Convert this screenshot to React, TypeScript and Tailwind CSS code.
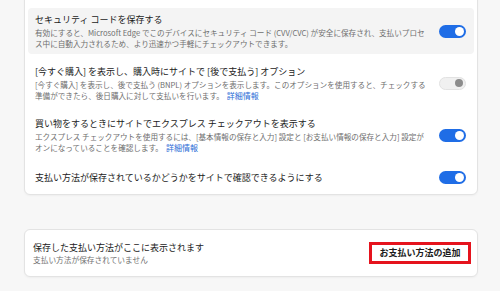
import React from "react";

const font = { fontFamily: '"Noto Sans CJK JP", "Noto Sans", sans-serif' };

function Toggle({ on, disabled }: { on: boolean; disabled?: boolean }) {
  if (disabled) {
    return (
      <div className="flex h-[13px] w-[27px] shrink-0 items-center justify-end rounded-full border border-[#e2e2e2] bg-[#f0f0f0] px-[2px]">
        <div className="h-[8px] w-[8px] rounded-full bg-[#8c8c8c]" />
      </div>
    );
  }
  return (
    <div
      className={
        on
          ? "flex h-[13px] w-[27px] shrink-0 items-center justify-end rounded-full bg-[#1f6de6] px-[2px]"
          : "flex h-[13px] w-[27px] shrink-0 items-center justify-start rounded-full border border-[#8a8a8a] bg-white px-[2px]"
      }
    >
      <div className="h-[9px] w-[9px] rounded-full bg-white" />
    </div>
  );
}

type Row = {
  title: string;
  desc?: string;
  link?: boolean;
  on: boolean;
  disabled?: boolean;
  hover?: boolean;
};

const rows: Row[] = [
  {
    title: "セキュリティ コードを保存する",
    desc: "有効にすると、Microsoft Edge でこのデバイスにセキュリティ コード (CVV/CVC) が安全に保存され、支払いプロセス中に自動入力されるため、より迅速かつ手軽にチェックアウトできます。",
    on: true,
    hover: true,
  },
  {
    title: "[今すぐ購入] を表示し、購入時にサイトで [後で支払う] オプション",
    desc: "[今すぐ購入] を表示し、後で支払う (BNPL) オプションを表示します。このオプションを使用すると、チェックする準備ができたら、後日購入に対して支払いを行います。",
    link: true,
    on: true,
    disabled: true,
  },
  {
    title: "買い物をするときにサイトでエクスプレス チェックアウトを表示する",
    desc: "エクスプレス チェックアウトを使用するには、[基本情報の保存と入力] 設定と [お支払い情報の保存と入力] 設定がオンになっていることを確認します。",
    link: true,
    on: true,
  },
  {
    title: "支払い方法が保存されているかどうかをサイトで確認できるようにする",
    on: true,
  },
];

export default function App() {
  return (
    <div
      className="h-[291px] w-[500px] overflow-hidden bg-[#f7f7f7] pl-[24px] pr-[22px]"
      style={font}
    >
      <div className="-mt-[10px] flex flex-col gap-[6px] rounded-[6px] border border-[#e3e3e3] bg-white px-[3px] pb-[4px] pt-[17px] shadow-[0_1px_2px_rgba(0,0,0,0.04)]">
        {rows.map((r) => (
          <div
            key={r.title}
            className={
              "flex items-center gap-[12px] rounded-[4px] pl-[7px] pr-[8px] " +
              (r.desc ? "min-h-[46px] " : "min-h-[26px] ") +
              (r.hover ? "bg-[#f4f4f4]" : "")
            }
          >
            <div className="min-w-0 flex-1">
              <div className="text-[9px] leading-[13px] text-[#1b1b1b]">{r.title}</div>
              {r.desc && (
                <div className="mt-[1px] text-[7.6px] leading-[11px] text-[#6e6e6e]">
                  {r.desc}
                  {r.link && (
                    <span className="ml-[3px] text-[8px] leading-[11px] text-[#2a6bd6]">詳細情報</span>
                  )}
                </div>
              )}
            </div>
            <Toggle on={r.on} disabled={r.disabled} />
          </div>
        ))}
      </div>

      <div className="mt-[34px] flex h-[48px] items-center justify-between rounded-[6px] border border-[#e3e3e3] bg-white pl-[8px] pr-[6px] shadow-[0_1px_2px_rgba(0,0,0,0.04)]">
        <div>
          <div className="text-[9px] leading-[12px] text-[#1b1b1b]">
            保存した支払い方法がここに表示されます
          </div>
          <div className="text-[7.7px] leading-[11px] text-[#707070]">
            支払い方法が保存されていません
          </div>
        </div>
        <button className="flex h-[22px] w-[102px] items-center justify-center border-[3px] border-[#e5131d] bg-white text-[9px] font-bold text-[#1b1b1b]">
          お支払い方法の追加
        </button>
      </div>
    </div>
  );
}
